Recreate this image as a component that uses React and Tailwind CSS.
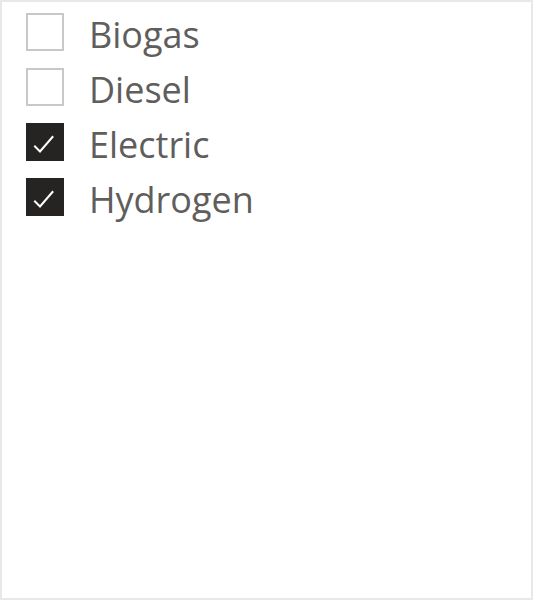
const items = [
  { label: 'Biogas', checked: false },
  { label: 'Diesel', checked: false },
  { label: 'Electric', checked: true },
  { label: 'Hydrogen', checked: true },
];

const Box = ({ checked }) =>
  checked ? (
    <div className="w-[38px] h-[38px] bg-[#252423] shrink-0">
      <svg width="38" height="38" viewBox="0 0 38 38" fill="none" stroke="#ffffff" strokeWidth="2" strokeLinecap="square">
        <path d="M9 23.5 L14 28.5 L26.5 14" />
      </svg>
    </div>
  ) : (
    <div className="w-[38px] h-[38px] border-2 border-[#c8c8c8] bg-white shrink-0" />
  );

export default function App() {
  return (
    <div className="w-[533px] h-[600px] bg-white border-2 border-[#e8e8e8] pt-[2px] pl-[24px]" style={{ fontFamily: '"Open Sans", "Noto Sans", sans-serif' }}>
      {items.map(item => (
        <div key={item.label} className="flex items-center h-[55px] gap-[25px]">
          <Box checked={item.checked} />
          <span className="text-[36px] text-[#605e5c] leading-none pt-[6px]">{item.label}</span>
        </div>
      ))}
    </div>
  );
}
